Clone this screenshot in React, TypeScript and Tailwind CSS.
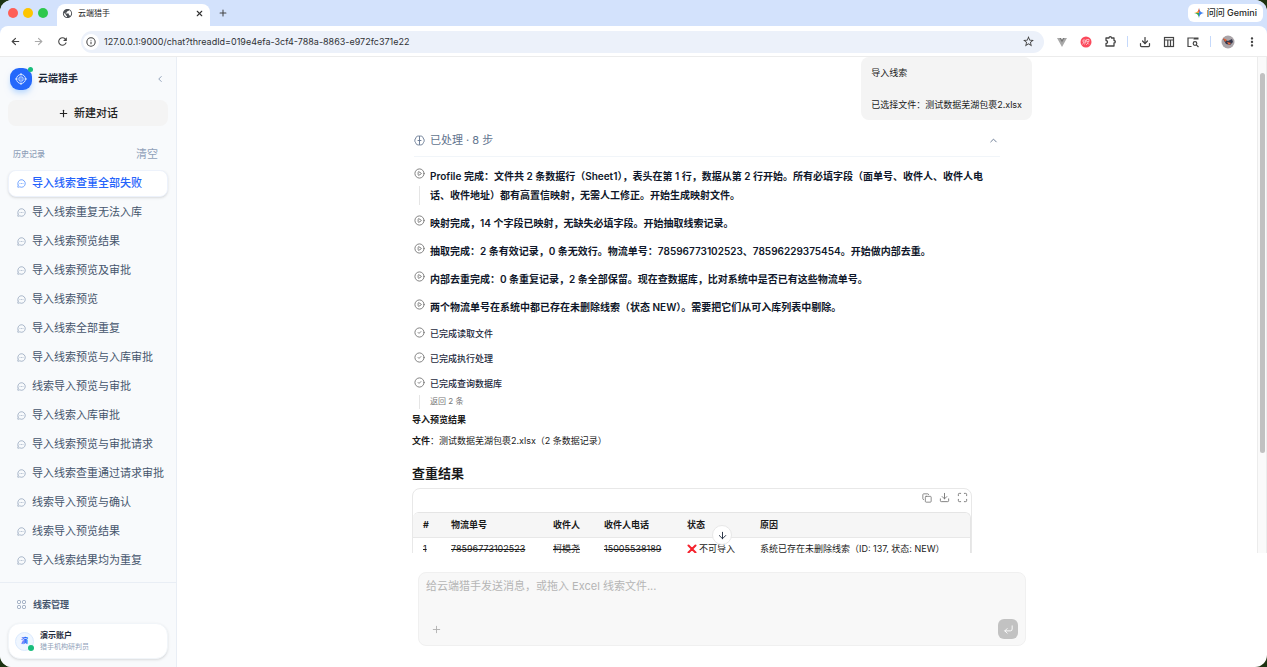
import type { ReactNode } from 'react';
import {
  ArrowDown,
  ArrowLeft,
  ArrowRight,
  ChevronLeft,
  ChevronUp,
  CircleCheck,
  CirclePlay,
  Copy,
  CornerDownLeft,
  Download,
  Info,
  Maximize,
  MessageCircleMore,
  Plus,
  X,
} from 'lucide-react';
import { MdMoreVert, MdOutlineStarBorder, MdPublic, MdRefresh } from 'react-icons/md';

const THREADS = [
  '导入线索查重全部失败',
  '导入线索重复无法入库',
  '导入线索预览结果',
  '导入线索预览及审批',
  '导入线索预览',
  '导入线索全部重复',
  '导入线索预览与入库审批',
  '线索导入预览与审批',
  '导入线索入库审批',
  '导入线索预览与审批请求',
  '导入线索查重通过请求审批',
  '线索导入预览与确认',
  '线索导入预览结果',
  '导入线索结果均为重复',
];

const NOTES = [
  'Profile 完成：文件共 2 条数据行（Sheet1），表头在第 1 行，数据从第 2 行开始。所有必填字段（面单号、收件人、收件人电话、收件地址）都有高置信映射，无需人工修正。开始生成映射文件。',
  '映射完成，14 个字段已映射，无缺失必填字段。开始抽取线索记录。',
  '抽取完成：2 条有效记录，0 条无效行。物流单号：78596773102523、78596229375454。开始做内部去重。',
  '内部去重完成：0 条重复记录，2 条全部保留。现在查数据库，比对系统中是否已有这些物流单号。',
  '两个物流单号在系统中都已存在未删除线索（状态 NEW）。需要把它们从可入库列表中剔除。',
];

const ACTIONS = [
  { label: '已完成读取文件' },
  { label: '已完成执行处理' },
  { label: '已完成查询数据库', detail: '返回 2 条' },
];

function BrowserChrome() {
  return (
    <header className="shrink-0 bg-[#d3e2fc]">
      <div className="flex h-[26px] items-end">
        <div className="flex h-full w-[57px] shrink-0 items-center gap-[5px] pl-2">
          <span className="size-[10px] rounded-full bg-[#fe5f57]" />
          <span className="size-[10px] rounded-full bg-[#fdc500]" />
          <span className="size-[10px] rounded-full bg-[#2dc84d]" />
        </div>
        <div className="flex h-[22px] w-[153px] items-center rounded-t-lg bg-white pr-[6px] pb-1 pl-[5px]">
          <MdPublic size={11} className="text-[#4b4f54]" />
          <span className="ml-[5px] flex-1 text-[8px] text-[#1f1f1f]">云端猎手</span>
          <button aria-label="关闭标签页"><X size={9} strokeWidth={3} className="text-[#333]" /></button>
        </div>
        <button aria-label="新标签页" className="mb-2 ml-2"><Plus size={10} strokeWidth={2.5} className="text-[#444]" /></button>
        <button className="mb-1 mr-1 ml-auto flex h-[18px] items-center gap-[3px] rounded-md bg-white px-[6px] text-[9px] font-medium text-[#1f1f1f]">
          <svg width="10" height="10" viewBox="0 0 20 20">
            <path d="M10 0C10.8 6 14 9.2 20 10H10Z" fill="#4285f4" />
            <path d="M20 10C14 10.8 10.8 14 10 20V10Z" fill="#3a7df0" />
            <path d="M10 20C9.2 14 6 10.8 0 10H10Z" fill="#34a853" />
            <path d="M0 10C6 9.2 9.2 6 10 0V10Z" fill="#f2a33a" />
            <path d="M10 0C9.8 3 9 5 7.500 7H12C11 5 10.300 3 10 0Z" fill="#ea4335" />
          </svg>
          问问 Gemini
        </button>
      </div>

      <div className="flex h-[31px] items-center rounded-t-lg bg-white pr-2 pl-[10px] text-[#444]">
        <button aria-label="后退"><ArrowLeft size={11} strokeWidth={2.5} /></button>
        <button aria-label="前进" className="ml-3 text-[#aaa]"><ArrowRight size={11} strokeWidth={2.5} /></button>
        <button aria-label="重新加载" className="ml-3"><MdRefresh size={13} /></button>
        <div className="ml-3 flex h-[22px] flex-1 items-center rounded-full bg-[#ecf1fa] pr-[9px] pl-[2px]">
          <span className="flex size-4 items-center justify-center rounded-full bg-white"><Info size={10} strokeWidth={2.5} /></span>
          <input
            aria-label="地址"
            readOnly
            value="127.0.0.1:9000/chat?threadId=019e4efa-3cf4-788a-8863-e972fc371e22"
            className="ml-[5px] flex-1 bg-transparent text-[9px] text-[#303236] outline-none"
          />
          <button aria-label="收藏"><MdOutlineStarBorder size={13} /></button>
        </div>
        <div className="ml-3 flex shrink-0 items-center">
          <svg width="12" height="12" viewBox="0 0 12 12">
            <path d="M1 2H4L6 5.500 8 2H11L6 11Z" fill="#a9a9a9" />
            <path d="M3.500 2H5L6 3.800 7 2H8.500L6 6.500Z" fill="#777" />
          </svg>
          <svg width="12" height="12" viewBox="0 0 24 24" className="ml-3">
            <circle cx="12" cy="12" r="11" fill="#fb4a5c" />
            <path d="M6 8H11V12H6ZM13 7H18V11H13ZM8 12L5 17M11 12L9 17M16 11V14L12 18M14 13L18 17" fill="none" stroke="#ffd9dd" strokeWidth="1.400" />
          </svg>
          <button aria-label="扩展程序" className="ml-3">
            <svg width="13" height="13" viewBox="0 0 26 26" fill="none" stroke="currentColor" strokeWidth="2.600" strokeLinejoin="round">
              <path d="M4 6H10C10 2.500 15 2.500 15 6H20V11C23.500 11 23.500 16 20 16V22H4V17C8 17 8 11 4 11Z" />
            </svg>
          </button>
          <span className="ml-[10px] h-[11px] w-px bg-[#c5d9fb]" />
          <button aria-label="下载内容" className="ml-[11px]"><Download size={12} strokeWidth={2.5} /></button>
          <svg width="12" height="12" viewBox="0 0 12 12" className="ml-3" fill="none" stroke="currentColor" strokeWidth="1.200">
            <rect x="1.500" y="1.500" width="9" height="9" />
            <path d="M1.500 4H10.500M4.800 4V10.500M7.500 4V10.500" />
          </svg>
          <svg width="12" height="12" viewBox="0 0 12 12" className="ml-3" fill="none" stroke="currentColor" strokeWidth="1.200">
            <path d="M4.500 10.500H1V2H6.500" />
            <path d="M6.500 2.500H11.500" strokeWidth="2.200" />
            <circle cx="8" cy="7.500" r="1.800" />
            <path d="M9.300 8.800L11.500 11" />
          </svg>
          <span className="ml-[11px] h-[11px] w-px bg-[#c5d9fb]" />
          <svg width="14" height="14" viewBox="0 0 14 14" className="ml-[10px]">
            <circle cx="7" cy="7" r="6.500" fill="#aaa4a8" />
            <path d="M2 4L7 6 11 4 12 7 9 10 5 9Z" fill="#37394d" />
            <path d="M2 3L6 5 4 7Z" fill="#e35b2c" />
            <path d="M6 7L10 8 8 10Z" fill="#ef6a3a" />
          </svg>
          <button aria-label="更多" className="ml-[10px]"><MdMoreVert size={14} /></button>
        </div>
      </div>
    </header>
  );
}

function Sidebar() {
  return (
    <aside className="flex w-[177px] shrink-0 flex-col border-r border-[#e9eef5] bg-[#f8fafc]">
      <div className="flex h-[43px] shrink-0 items-center pr-[11px] pl-[10px]">
        <div className="relative flex size-[22px] items-center justify-center rounded-[9px] bg-[#2468fb] shadow-md shadow-blue-200">
          <svg width="12" height="12" viewBox="0 0 24 24" fill="none" stroke="#d8e6ff" strokeWidth="2">
            <circle cx="12" cy="12" r="9" />
            <rect x="8" y="8" width="8" height="8" rx="2" />
            <path d="M12 0V5M12 19V24M0 12H5M19 12H24M10.500 12H13.500" />
          </svg>
          <span className="absolute -top-px -right-px size-[5px] rounded-full bg-[#19bd7c]" />
        </div>
        <span className="ml-[6px] flex-1 text-[10px] font-bold text-[#1e293b]">云端猎手</span>
        <button aria-label="收起侧栏"><ChevronLeft size={10} className="text-[#7f91ad]" /></button>
      </div>

      <button className="mx-2 flex h-[26px] shrink-0 items-center justify-center gap-[5px] rounded-lg bg-[#f4f4f4] text-[11px] font-medium text-[#222]">
        <Plus size={11} strokeWidth={2.5} />
        新建对话
      </button>

      <div className="mt-[18px] flex h-5 shrink-0 items-center justify-between pr-[18px] pl-[13px] text-[#90a1b9]">
        <h2 className="text-[8px] font-medium">历史记录</h2>
        <button className="text-[11px]">清空</button>
      </div>

      <nav className="mt-[6px] flex min-h-0 flex-1 flex-col gap-[2px] overflow-hidden px-2">
        {THREADS.map((title, i) => (
          <a
            key={title}
            href="#"
            className={
              i === 0
                ? 'flex h-[27px] shrink-0 items-center gap-[6px] rounded-lg border border-[#edf2fb] bg-white pl-2 text-[11px] whitespace-nowrap font-medium text-[#2563fb] shadow-sm'
                : 'flex h-[27px] shrink-0 items-center gap-[6px] rounded-lg border border-transparent pl-2 text-[11px] whitespace-nowrap text-[#45556c]'
            }
          >
            <MessageCircleMore size={9} className={i === 0 ? 'shrink-0 text-[#4b8bff]' : 'shrink-0 text-[#90a1b9]'} />
            {title}
          </a>
        ))}
      </nav>

      <div className="flex h-[85px] shrink-0 flex-col border-t border-[#e9eef5] px-2">
        <a href="#" className="flex h-10 items-center gap-[7px] pt-[3px] pl-[9px] text-[9px] font-semibold text-[#45556c]">
          <svg width="9" height="9" viewBox="0 0 18 18" fill="none" stroke="#90a1b9" strokeWidth="2">
            <rect x="1" y="1" width="6" height="6" rx="2" />
            <rect x="11" y="1" width="6" height="6" rx="2" />
            <rect x="1" y="11" width="6" height="6" rx="2" />
            <rect x="11" y="11" width="6" height="6" rx="2" />
          </svg>
          线索管理
        </a>
        <div className="flex h-9 items-center gap-[6px] rounded-xl border border-[#f1f5f9] bg-white pl-[6px] shadow-sm">
          <div className="relative flex size-[19px] items-center justify-center rounded-full border border-[#dbeafe] bg-[#eff6ff] text-[7px] font-bold text-[#2563fb]">
            演
            <span className="absolute -right-px -bottom-px size-[6px] rounded-full bg-[#19bd7c]" />
          </div>
          <div>
            <p className="text-[8px] leading-[11px] font-bold text-[#1e293b]">演示账户</p>
            <p className="text-[7px] leading-[11px] text-[#90a1b9]">猎手机构研判员</p>
          </div>
        </div>
      </div>
    </aside>
  );
}

function Step({ icon, line, children }: { icon: ReactNode; line?: boolean; children: ReactNode }) {
  return (
    <li className="flex gap-[5px]">
      <div className="flex w-[11px] shrink-0 flex-col items-center gap-[7px] pt-px text-[#777]">
        {icon}
        {line && <span className="w-px flex-1 bg-[#e5e5e5]" />}
      </div>
      <div className="min-w-0 flex-1">{children}</div>
    </li>
  );
}

function ResultTable() {
  return (
    <div className="mt-[5px] w-[560px] max-w-full rounded-lg border border-[#e8e8e8]">
      <div className="flex h-[23px] items-center justify-end gap-[7px] pr-[3px] pb-[6px] text-[#777]">
        <button aria-label="复制"><Copy size={10} /></button>
        <button aria-label="下载"><Download size={11} /></button>
        <button aria-label="全屏"><Maximize size={11} /></button>
      </div>
      <div className="overflow-hidden rounded-t-md border-t border-r border-[#e5e5e5]">
        <table className="w-full table-fixed text-left text-[9px] whitespace-nowrap text-[#1a1a1a]">
          <colgroup>
            <col className="w-[28px]" />
            <col className="w-[102px]" />
            <col className="w-[51px]" />
            <col className="w-[83px]" />
            <col className="w-[73px]" />
            <col />
          </colgroup>
          <thead className="border-b border-[#e8e8e8] bg-[#f6f6f6]">
            <tr className="h-6">
              <th className="pl-[10px]">#</th>
              <th className="pl-[10px]">物流单号</th>
              <th className="pl-[10px]">收件人</th>
              <th className="pl-[10px]">收件人电话</th>
              <th className="pl-[10px]">状态</th>
              <th className="pl-[10px]">原因</th>
            </tr>
          </thead>
          <tbody className="leading-[10px]">
            <tr className="h-[23px]">
              <td className="pl-[10px]"><del>1</del></td>
              <td className="pl-[10px]"><del>78596773102523</del></td>
              <td className="pl-[10px]"><del>柯模尧</del></td>
              <td className="pl-[10px]"><del>15005538189</del></td>
              <td className="pl-[10px]">
                <span className="flex items-center gap-[2px]">
                  <svg width="10" height="10" viewBox="0 0 10 10" stroke="#f5222d" strokeWidth="2" strokeLinecap="round">
                    <path d="M1.500 1.500L8.500 8.500M8.500 1.500L1.500 8.500" />
                  </svg>
                  不可导入
                </span>
              </td>
              <td className="pl-[10px]">系统已存在未删除线索（ID: 137, 状态: NEW）</td>
            </tr>
          </tbody>
        </table>
      </div>
    </div>
  );
}

function Messages() {
  return (
    <div className="mx-auto w-[620px] max-w-full text-[9px] text-[#1a1a1a]">
      <div className="ml-auto w-fit rounded-lg bg-[#f4f4f4] px-[10px] pt-2 pb-[7px] leading-4 whitespace-pre-line">
        {'导入线索\n\n已选择文件：测试数据芜湖包裹2.xlsx'}
      </div>

      <section className="mt-[9px] mr-8 ml-[2px]">
        <button className="flex h-7 w-full items-center gap-[5px] border-b border-[#f1f5f9] pr-px pb-[5px] text-[11px] text-[#62748e]">
          <svg width="11" height="11" viewBox="0 0 22 22" fill="none" stroke="currentColor" strokeWidth="1.800" strokeLinecap="round">
            <path d="M9 2C5 2 4 4 4 6C1 8 1 13 3 15C4 19 7 20 9 20" />
            <path d="M13 2C17 2 18 4 18 6C21 8 21 13 19 15C18 19 15 20 13 20" />
            <path d="M11 2V20M8 11H14" />
          </svg>
          已处理 · 8 步
          <ChevronUp size={11} className="ml-auto" />
        </button>
        <ul className="flex flex-col gap-[9px] pt-[10px]">
          {NOTES.map((note, i) => (
            <Step key={note} icon={<CirclePlay size={11} />} line={i === 0}>
              <p className="pr-1 text-[10px] leading-[19px] font-semibold text-[#0f172a]">{note}</p>
            </Step>
          ))}
          {ACTIONS.map(({ label, detail }) => (
            <Step key={label} icon={<CircleCheck size={11} />} line={!!detail}>
              <p className="leading-4 font-medium text-[#1d293d]">{label}</p>
              {detail && <p className="pt-px text-[8px] leading-4 text-[#777]">{detail}</p>}
            </Step>
          ))}
        </ul>
      </section>

      <p className="mt-[3px] leading-4 font-bold">导入预览结果</p>
      <p className="mt-[5px] leading-4"><strong>文件</strong>：测试数据芜湖包裹2.xlsx（2 条数据记录）</p>
      <h2 className="mt-[14px] text-[13px] leading-5 font-bold">查重结果</h2>
      <ResultTable />
    </div>
  );
}

function Composer() {
  return (
    <div className="mx-auto w-[620px] max-w-full shrink-0 px-[6px] pt-[19px] pb-[21px]">
      <div className="flex h-[74px] flex-col justify-between rounded-lg border border-[#f0f0f0] bg-[#f8f8f8] px-[7px] pt-[5px] pb-[6px]">
        <textarea
          aria-label="消息"
          rows={1}
          placeholder="给云端猎手发送消息，或拖入 Excel 线索文件..."
          className="w-full resize-none text-[11px] leading-4 outline-none placeholder:text-[#b5b5b5]"
        />
        <div className="flex items-center justify-between pl-[5px]">
          <button aria-label="添加附件"><Plus size={11} className="text-[#b0b0b0]" /></button>
          <button aria-label="发送" className="flex size-5 items-center justify-center rounded-md bg-[#c2c2c2] text-white">
            <CornerDownLeft size={11} />
          </button>
        </div>
      </div>
    </div>
  );
}

export default function App() {
  return (
    <div className="h-screen bg-[#1d3312]">
      <div className="flex h-full flex-col overflow-hidden rounded-xl bg-white font-['Inter','Noto_Sans_CJK_SC',sans-serif]">
        <BrowserChrome />
        <div className="flex min-h-0 flex-1 shadow-[0_-1px_0_#ececec]">
          <Sidebar />
          <main className="flex min-w-0 flex-1 flex-col">
            <div className="relative min-h-0 flex-1 overflow-hidden">
              <Messages />
              <button
                aria-label="滚动到底部"
                className="absolute bottom-2 left-1/2 flex size-5 -translate-x-1/2 items-center justify-center rounded-full border border-[#e8e8e8] bg-white text-[#1e293b]"
              >
                <ArrowDown size={11} />
              </button>
              <div className="absolute inset-y-0 right-0 w-[10px] border-x border-[#ececec] bg-[#fafafa]">
                <div className="mx-auto mt-4 h-[380px] w-[5px] rounded-full bg-[#c1c1c1]" />
              </div>
            </div>
            <Composer />
          </main>
        </div>
      </div>
    </div>
  );
}
